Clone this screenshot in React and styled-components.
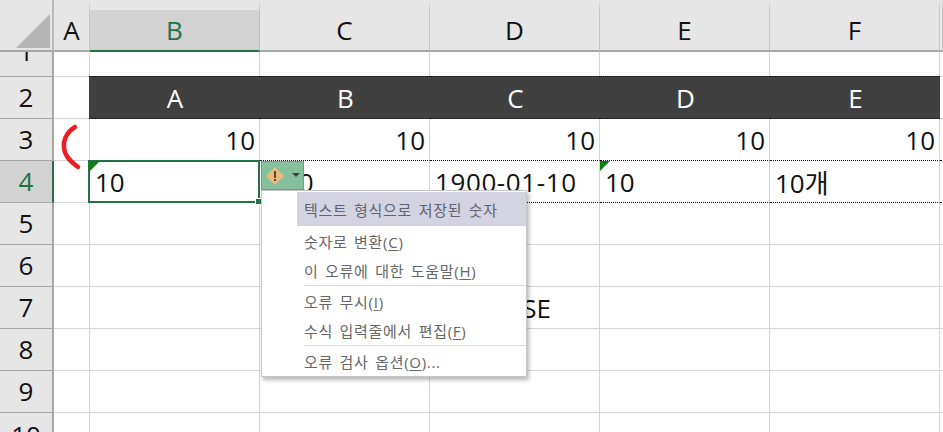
import styled, { createGlobalStyle } from "styled-components";

const GREEN = "#217346";
const GRID = "#d4d4d4";
const HEAD_LINE = "#a6a6a6";

const Global = createGlobalStyle`
  html, body {
    margin: 0;
    padding: 0;
    background: #fff;
  }
`;

const Sheet = styled.div`
  position: relative;
  width: 943px;
  height: 432px;
  overflow: hidden;
  display: grid;
  grid-template-columns: 54px 36px repeat(5, 170px) 3px;
  grid-template-rows: 52px 25px repeat(9, 42px);
  font-family: "Open Sans", "Noto Sans CJK KR", sans-serif;
  font-size: 26px;
  color: #111;
`;

const Corner = styled.div`
  background: #e6e6e6;
  border-right: 2px solid #b8b8b8;
  border-bottom: 2px solid ${HEAD_LINE};
  box-sizing: border-box;
  display: flex;
  align-items: flex-end;
  justify-content: flex-end;
  padding: 0 2px 2px 0;
`;

const ColHead = styled.div`
  box-sizing: border-box;
  background: ${(p) => (p.$active ? "#d2d2d2" : "#e6e6e6")};
  color: ${(p) => (p.$active ? GREEN : "#111")};
  border-right: 1px solid ${(p) => (p.$active ? "#c0c0c0" : "#c6c6c6")};
  border-bottom: 2px solid ${(p) => (p.$active ? GREEN : HEAD_LINE)};
  border-top: ${(p) => (p.$active ? "10px solid #e6e6e6" : "10px solid transparent")};
  background-clip: ${(p) => (p.$active ? "padding-box" : "border-box")};
  display: flex;
  justify-content: center;
  align-items: center;
  line-height: 33px;
`;

const RowHead = styled.div`
  box-sizing: border-box;
  background: ${(p) => (p.$active ? "#d2d2d2" : "#e6e6e6")};
  color: ${(p) => (p.$active ? GREEN : "#111")};
  border-right: 2px solid ${(p) => (p.$active ? GREEN : HEAD_LINE)};
  border-bottom: 1px solid ${HEAD_LINE};
  display: flex;
  justify-content: center;
  align-items: ${(p) => (p.$clip ? "flex-end" : "center")};
  overflow: hidden;
  line-height: 33px;
  ${(p) => p.$clip && "padding-bottom: 8px;"}
  ${(p) => p.$tall && "align-items: flex-start; padding-top: 6px;"}
`;

const Cell = styled.div`
  position: relative;
  box-sizing: border-box;
  display: flex;
  align-items: center;
  padding: 0 4px 0 ${(p) => p.$indent || 5}px;
  overflow: hidden;
  white-space: nowrap;
  justify-content: ${(p) => p.$align || "flex-start"};
  letter-spacing: ${(p) => p.$spacing || 0}px;
  background: ${(p) => (p.$dark ? "#404040" : "#fff")};
  color: ${(p) => (p.$dark ? "#fff" : "#111")};
  border-right: ${(p) => (p.$dark ? "0" : `1px solid ${GRID}`)};
  border-bottom: ${(p) => (p.$dotted ? "1px dotted #111" : `1px solid ${GRID}`)};
  border-top: ${(p) => (p.$dark ? "1px dotted #111" : "0")};
  margin-top: ${(p) => (p.$dark ? "-1px" : "0")};
  margin-left: ${(p) => (p.$bleed ? "-1px" : "0")};
`;

const ErrorMark = styled.span`
  position: absolute;
  left: 0;
  top: 0;
  width: 0;
  height: 0;
  border-top: 10px solid #0f7f12;
  border-right: 10px solid transparent;
`;

const Selection = styled.div`
  position: absolute;
  left: 88px;
  top: 160px;
  width: 172px;
  height: 43px;
  box-sizing: border-box;
  border: 2px solid ${GREEN};
  &::after {
    content: "";
    position: absolute;
    right: -4px;
    bottom: -4px;
    width: 5px;
    height: 5px;
    background: ${GREEN};
    border: 1px solid #fff;
  }
`;

const SmartTag = styled.div`
  position: absolute;
  left: 261px;
  top: 161px;
  width: 43px;
  height: 29px;
  box-sizing: border-box;
  background: #86bf9b;
  border: 1px solid #5fa87c;
  display: flex;
  align-items: center;
  padding-left: 3px;
  gap: 7px;
`;

const Caret = styled.span`
  width: 0;
  height: 0;
  margin-top: -1px;
  border-left: 4px solid transparent;
  border-right: 4px solid transparent;
  border-top: 4px solid #444;
`;

const Menu = styled.div`
  position: absolute;
  left: 261px;
  top: 190px;
  width: 266px;
  height: 187px;
  box-sizing: border-box;
  background: #fff;
  border: 1px solid #c6c6c6;
  box-shadow: 2px 3px 4px rgba(0, 0, 0, 0.28);
  padding-top: 1px;
  font-size: 15px;
  letter-spacing: 0.7px;
  word-spacing: 2px;
  color: #666;
`;

const MenuTitle = styled.div`
  margin-left: 35px;
  height: 34px;
  padding-left: 7px;
  background: #d3d3e1;
  display: flex;
  align-items: center;
  color: #626272;
`;

const MenuItem = styled.div`
  height: 29px;
  padding-left: 42px;
  display: flex;
  align-items: center;
  white-space: pre;
  u {
    text-underline-offset: 2px;
  }
`;

const MenuGroup = styled.div`
  padding-top: 1px;
  border-bottom: ${(p) => (p.$line ? "1px solid #dcdcdc" : "0")};
  margin-left: 42px;
  & > ${MenuItem} {
    margin-left: -42px;
  }
`;

const columns = ["B", "C", "D", "E", "F"];
const rows = [2, 3, 4, 5, 6, 7, 8, 9, 10];
const bandLabels = ["A", "B", "C", "D", "E"];
const row4 = [
  { text: "10", mark: true },
  { text: "100", indent: 9 },
  { text: "1900-01-10", spacing: 0.6 },
  { text: "10", mark: true },
  { text: "10개" },
];

function renderCells(row) {
  return columns.map((col, i) => {
    const key = col + row;
    if (row === 2) {
      return (
        <Cell key={key} $dark $dotted $bleed={i === 0} $align="center">
          {bandLabels[i]}
        </Cell>
      );
    }
    if (row === 3) {
      return (
        <Cell key={key} $dotted $align="flex-end">
          10
        </Cell>
      );
    }
    if (row === 4) {
      return (
        <Cell key={key} $dotted $indent={row4[i].indent} $spacing={row4[i].spacing}>
          {row4[i].mark && <ErrorMark />}
          {row4[i].text}
        </Cell>
      );
    }
    if (row === 7 && col === "D") {
      return (
        <Cell key={key} $align="center">
          FALSE
        </Cell>
      );
    }
    return <Cell key={key} />;
  });
}

const App = () => {
  return (
    <>
      <Global />
      <Sheet>
        <Corner>
          <svg width="34" height="34" viewBox="0 0 34 34">
            <path d="M34 0V34H0Z" fill="#b5b5b5" />
          </svg>
        </Corner>
        <ColHead>A</ColHead>
        {columns.map((c, i) => (
          <ColHead key={c} $active={i === 0}>
            {c}
          </ColHead>
        ))}
        <ColHead />

        <RowHead $clip>1</RowHead>
        <Cell />
        {columns.map((c) => (
          <Cell key={c} />
        ))}
        <Cell />

        {rows.map((row) => (
          <div key={row} style={{ display: "contents" }}>
            <RowHead $active={row === 4} $tall={row === 10}>
              {row}
            </RowHead>
            <Cell />
            {renderCells(row)}
            <Cell $dotted={row === 3 || row === 4} />
          </div>
        ))}

        <svg
          width="30"
          height="50"
          viewBox="0 0 30 50"
          style={{ position: "absolute", left: 55, top: 122 }}
        >
          <path
            d="M20 5C12 10 8 18 9 26C10 34 15 39 23 45"
            fill="none"
            stroke="#ee1c25"
            strokeWidth="4.5"
            strokeLinecap="round"
          />
        </svg>

        <Selection />

        <SmartTag>
          <svg width="20" height="20" viewBox="0 0 20 20">
            <path d="M10 1.5L18.5 10L10 18.5L1.5 10Z" fill="#e8bc7c" stroke="#e8bc7c" strokeLinejoin="round" />
            <rect x="9" y="5" width="2" height="7" fill="#5a4a30" />
            <rect x="9" y="13" width="2" height="2" fill="#5a4a30" />
          </svg>
          <Caret />
        </SmartTag>

        <Menu>
          <MenuTitle>텍스트 형식으로 저장된 숫자</MenuTitle>
          <MenuGroup $line>
            <MenuItem>숫자로 변환(<u>C</u>)</MenuItem>
            <MenuItem>이 오류에 대한 도움말(<u>H</u>)</MenuItem>
          </MenuGroup>
          <MenuGroup $line>
            <MenuItem>오류 무시(<u>I</u>)</MenuItem>
            <MenuItem>수식 입력줄에서 편집(<u>F</u>)</MenuItem>
          </MenuGroup>
          <MenuGroup>
            <MenuItem>오류 검사 옵션(<u>O</u>)...</MenuItem>
          </MenuGroup>
        </Menu>
      </Sheet>
    </>
  );
};

export default App;
